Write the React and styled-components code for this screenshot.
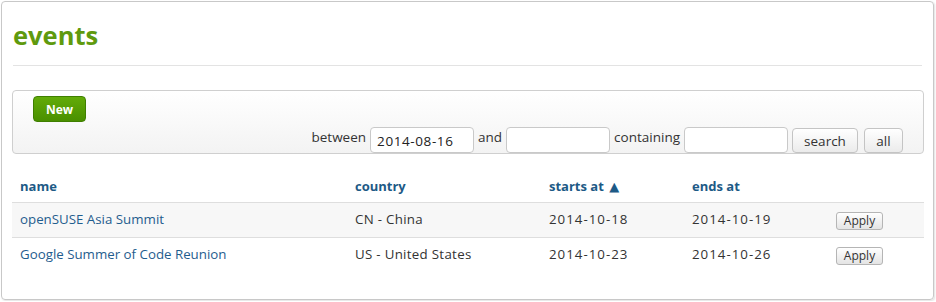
import React from "react";
import styled, { createGlobalStyle } from "styled-components";

const GlobalStyle = createGlobalStyle`
  body {
    margin: 0;
    background: #fff;
    font-family: "Open Sans", "DejaVu Sans", sans-serif;
    font-size: 13px;
    color: #333;
  }
`;

const events = [
  {
    name: "openSUSE Asia Summit",
    country: "CN - China",
    from: "2014-10-18",
    to: "2014-10-19",
  },
  {
    name: "Google Summer of Code Reunion",
    country: "US - United States",
    from: "2014-10-23",
    to: "2014-10-26",
  },
];

export default function App() {
  return (
    <>
      <GlobalStyle />
      <StyledCard>
        <StyledTitle>events</StyledTitle>
        <StyledRule />
        <StyledFilterBox>
          <StyledNewButton>New</StyledNewButton>
          <StyledFilterRow>
            <StyledLabel>between</StyledLabel>
            <StyledInput defaultValue="2014-08-16" />
            <StyledLabel>and</StyledLabel>
            <StyledInput />
            <StyledLabel>containing</StyledLabel>
            <StyledInput />
            <StyledButton $width={66}>search</StyledButton>
            <StyledButton $width={39} $gap={6}>
              all
            </StyledButton>
          </StyledFilterRow>
        </StyledFilterBox>
        <StyledTable>
          <colgroup>
            <col style={{ width: 335 }} />
            <col style={{ width: 194 }} />
            <col style={{ width: 143 }} />
            <col style={{ width: 144 }} />
            <col />
          </colgroup>
          <thead>
            <tr>
              <StyledHead>name</StyledHead>
              <StyledHead>country</StyledHead>
              <StyledHead>
                starts at <StyledArrow>▲</StyledArrow>
              </StyledHead>
              <StyledHead>ends at</StyledHead>
              <StyledHead />
            </tr>
          </thead>
          <tbody>
            {events.map((item, i) => (
              <StyledRow key={item.name} $odd={i % 2 === 0}>
                <StyledCell>
                  <StyledLink href="#">{item.name}</StyledLink>
                </StyledCell>
                <StyledCell $spacing={0.3}>{item.country}</StyledCell>
                <StyledCell $spacing={1}>{item.from}</StyledCell>
                <StyledCell $spacing={1}>{item.to}</StyledCell>
                <StyledCell>
                  <StyledApply>Apply</StyledApply>
                </StyledCell>
              </StyledRow>
            ))}
          </tbody>
        </StyledTable>
      </StyledCard>
    </>
  );
}

const StyledCard = styled.div`
  box-sizing: border-box;
  margin: 1px;
  width: 933px;
  height: 299px;
  border: 1px solid #c8c8c8;
  border-radius: 4px;
  box-shadow: 1px 1px 2px rgba(0, 0, 0, 0.12);
  padding: 16px 9px 0 10px;
`;

const StyledTitle = styled.h1`
  margin: 0 0 0 1px;
  font-size: 25.5px;
  line-height: 34px;
  font-weight: 700;
  color: #5f9a0e;
`;

const StyledRule = styled.div`
  height: 1px;
  background: #e3e3e3;
  margin: 13px 2px 24px 1px;
`;

const StyledFilterBox = styled.div`
  box-sizing: border-box;
  height: 64px;
  border: 1px solid #cfcfcf;
  border-radius: 4px;
  background: linear-gradient(#ffffff, #f3f3f3);
  padding: 5px 20px 0 20px;
`;

const StyledNewButton = styled.button`
  display: block;
  box-sizing: border-box;
  width: 53px;
  height: 26px;
  border: 1px solid #3f7f00;
  border-radius: 4px;
  background: linear-gradient(#62ab08, #4a8f00);
  color: #fff;
  font-family: inherit;
  font-size: 12px;
  font-weight: 700;
  padding: 0;
`;

const StyledFilterRow = styled.div`
  display: flex;
  justify-content: flex-end;
  align-items: center;
  margin-top: 5px;
`;

const StyledLabel = styled.span`
  margin: 0 4px;
  padding-bottom: 6px;
  font-size: 13.5px;
  color: #333;
`;

const StyledInput = styled.input`
  box-sizing: border-box;
  width: 104px;
  height: 26px;
  border: 1px solid #c9c9c9;
  border-radius: 4px;
  background: #fff;
  font-family: inherit;
  font-size: 13.5px;
  letter-spacing: 0.6px;
  color: #222;
  padding: 2px 6px 0;
`;

const StyledButton = styled.button`
  box-sizing: border-box;
  width: ${(p) => p.$width}px;
  height: 25px;
  margin-left: ${(p) => p.$gap || 4}px;
  border: 1px solid #c4c4c4;
  border-radius: 4px;
  background: linear-gradient(#ffffff, #ebebeb);
  font-family: inherit;
  font-size: 13.5px;
  color: #333;
  padding: 2px 0 0;
`;

const StyledTable = styled.table`
  width: 912px;
  margin-top: 18px;
  border-collapse: collapse;
  table-layout: fixed;
`;

const StyledHead = styled.th`
  text-align: left;
  font-weight: 700;
  color: #1d5a86;
  padding: 4px 8px 6px;
  height: 20px;
  border-bottom: 1px solid #dedede;
`;

const StyledArrow = styled.span`
  margin-left: 2px;
`;

const StyledRow = styled.tr`
  background: ${(p) => (p.$odd ? "#f7f7f7" : "transparent")};
  border-bottom: ${(p) => (p.$odd ? "1px solid #dedede" : "none")};
`;

const StyledCell = styled.td`
  height: 35px;
  padding: 0 8px 2px;
  box-sizing: border-box;
  font-size: 13.3px;
  letter-spacing: ${(p) => p.$spacing || 0}px;
  color: #333;
`;

const StyledLink = styled.a`
  color: #1f5d8e;
  text-decoration: none;
`;

const StyledApply = styled.button`
  box-sizing: border-box;
  width: 47px;
  height: 18px;
  border: 1px solid #b5b5b5;
  border-radius: 3px;
  background: linear-gradient(#ffffff, #e4e4e4);
  font-family: inherit;
  font-size: 12px;
  line-height: 14px;
  letter-spacing: 0;
  color: #333;
  padding: 0;
  margin-top: 3px;
`;
